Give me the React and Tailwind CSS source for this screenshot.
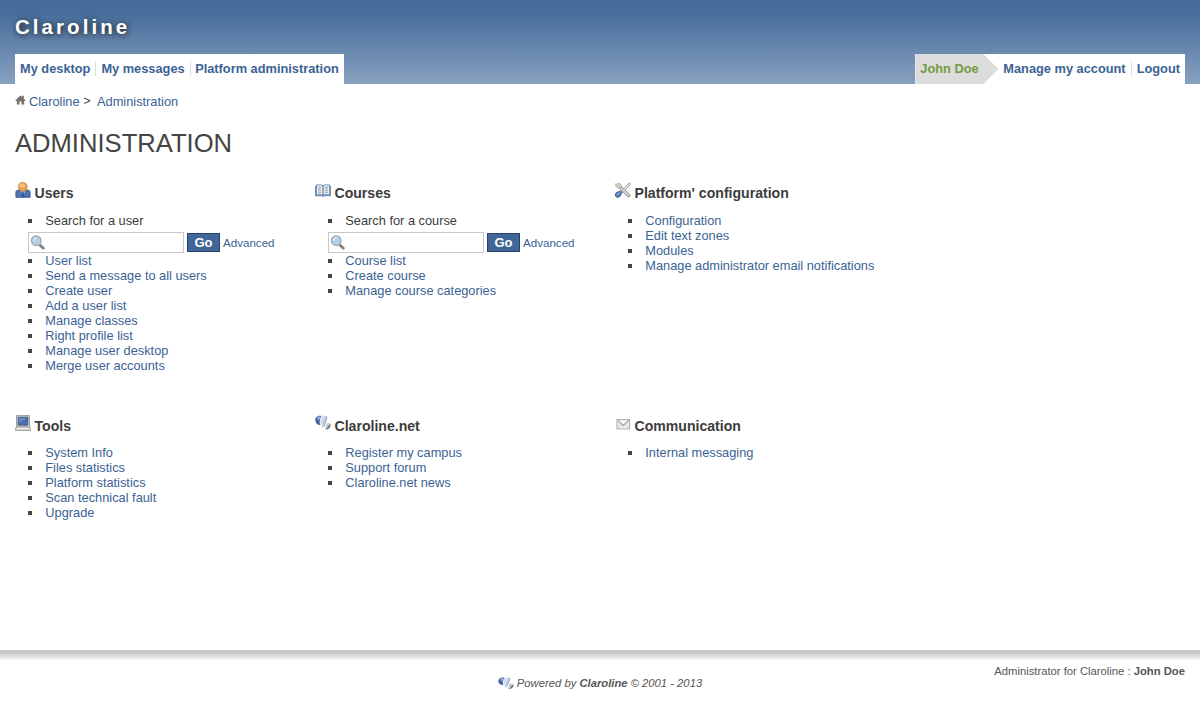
import React from "react";

const HomeIcon = () => (
  <svg width="11" height="10" viewBox="0 0 11 10" className="mb-[3px] block">
    <path d="M0.3 5.4 5.3 0.4 7 2V0.8h1.8v2.8l1.8 1.8-.6.5H9.200v3.600H6.400V6.500H4.500v3H1.900V5.900H.8z" fill="#79716c" />
  </svg>
);

const UserIcon = () => (
  <svg width="16" height="16" viewBox="0 0 16 16" className="block">
    <path d="M.9 15.300V10.200c0-1.300 1-2 2.600-2.100h9c1.600.1 2.600.8 2.600 2.100v5.100z" fill="#5274b2" stroke="#3a568e" strokeWidth=".9" />
    <path d="M5.300 8.800h5.400L8 14z" fill="#86a3d3" />
    <path d="M7.300 10.200h1.400l.8 3.800L8 15.200 6.500 14z" fill="#33559a" />
    <path d="M7.800.5c2.700 0 4.400 1.600 4.400 4.200 0 2.700-1.800 4.700-4.400 4.700S3.400 7.400 3.400 4.700C3.400 2.100 5.100.5 7.800.5z" fill="#e8a655" stroke="#c58440" strokeWidth=".8" />
    <ellipse cx="7.200" cy="3.400" rx="2.800" ry="2" fill="#f4c583" />
  </svg>
);

const BookIcon = () => (
  <svg width="16" height="16" viewBox="0 0 16 16" className="block">
    <path d="M.5 4h1V2.900h5L8 3.800l1.500-.9h5V4h1v9.800H9.300L8 14.400l-1.300-.6H.5z" fill="#7f9cc6" stroke="#6283b5" strokeWidth=".9" />
    <path d="M2 3.300h4.300L7.500 4.200v8.600l-1.200-.7H2zM14 3.300H9.700L8.500 4.200v8.600l1.200-.7H14z" fill="#ececec" />
    <path d="M3 5h3M3 6.800h3M3 8.600h3M3 10.400h3M10 5h3M10 6.800h3M10 8.600h3M10 10.400h3" stroke="#98a2b0" strokeWidth=".9" />
    <path d="M8 4v9.500" stroke="#75839a" strokeWidth=".9" />
  </svg>
);

const SettingsIcon = () => (
  <svg width="16" height="16" viewBox="0 0 16 16" className="block">
    <path d="m4.600 4.800 9 8.700" stroke="#8e8e8e" strokeWidth="3.400" strokeLinecap="round" />
    <path d="m4.600 4.800 8.900 8.600" stroke="#dedede" strokeWidth="1.800" strokeLinecap="round" />
    <path d="M1 1.500.7 4l2 2h2.500l1-1-.4-2.300L4.200 1l-1 .1.400 1.800-1 .7z" fill="#d8d8d8" stroke="#929292" strokeWidth=".7" />
    <path d="m6.500 9.100 6.300-7 1.800-1.300 1 .9-.9 1.500-6.900 7.100z" fill="#e4e4e4" stroke="#929292" strokeWidth=".8" />
    <path d="M4.700 9.300c1.200-.6 2.500.5 2 1.800-.6 1.900-2 4.300-4.100 4.300C.9 15.400.2 13.700.4 12c.3-1.600 2.700-2.100 4.300-2.700z" fill="#5a7fb7" stroke="#31558f" strokeWidth=".9" />
    <path d="m4.700 10.700-2.800 2" stroke="#8dabd6" strokeWidth="1.100" />
  </svg>
);

const ComputerIcon = () => (
  <svg width="16" height="16" viewBox="0 0 16 16" className="block">
    <path d="M1.500.6h13v11.200h-13z" fill="#d6d6d2" stroke="#999b98" />
    <path d="M3.200 2.200h9.600v7.900H3.200z" fill="#4d6dab" stroke="#344f86" strokeWidth=".8" />
    <path d="M3.800 2.800h8.400L4 7.800z" fill="#6c89bc" />
    <path d="M1.400 11.800h13.200l1 2v1.700H.4v-1.700z" fill="#d3d3cf" stroke="#969692" strokeWidth=".8" />
    <path d="M2 13.600h12" stroke="#ededea" />
  </svg>
);

const ClarolineIcon = ({ className = "block h-4 w-4" }) => (
  <svg viewBox="0 0 16 16" preserveAspectRatio="none" className={className}>
    <path d="M6.500.9C3 .2.2 2.200.3 5.200c.1 2.600 2 4.800 5.200 4.900C4 7.700 4.500 3.800 6.500.9z" fill="#3c62a3" />
    <path d="M2.600 2.300c1.100-.9 2.400-.9 3.400-.7-1 .9-1.700 2.300-1.900 3.600-1.300-.3-2.100-1.600-1.500-2.900z" fill="#a8bddc" />
    <path d="M6.900 1.200C5.200 3.300 4.600 6.800 5.800 9.900 8 9.300 9.400 7 10 4.600L10.200.9z" fill="#d5dfed" />
    <path d="M9.800.8c1.700-.4 2.500.7 1.900 2.500L9.100 11.300c-.6 1.700-2.200 1.900-2.500.8.1-1.100 2.300-7.700 3.200-11.300z" fill="#c2d0e4" />
    <path d="M11.400 1.300c.6 1.100.1 2.500-.3 3.700L9 11.200" fill="none" stroke="#7f98bf" strokeWidth=".9" />
    <path d="M11.600 8.500c2.500-1.200 4.200-.2 3.900 1.500-.3 2.300-2 4.500-4.400 4.700-1.300 0-1.300-1.400-.4-3z" fill="#c6c8ca" />
    <path d="M15.500 9.100c.3 2.900-1.500 5.600-4.500 5.500 1.500-1 2-4.300 4.500-5.500z" fill="#6e7176" />
  </svg>
);

const MailIcon = () => (
  <svg width="16" height="16" viewBox="0 0 16 16" className="block">
    <path d="M2 4.600h12.500v9.400H2z" fill="#ededed" stroke="#b3b3b3" strokeWidth="1.200" />
    <path d="m3 13.100 3.700-4M13.500 13.100l-3.700-4" stroke="#c7c7c7" strokeWidth=".8" />
    <path d="m3 5.700 5.200 4.700 5.300-4.700" fill="#fafafa" stroke="#999" strokeWidth="1.100" />
  </svg>
);

const SearchIcon = () => (
  <svg width="16" height="16" viewBox="0 0 16 16" className="block">
    <path d="m10.200 10.400 3.200 2.800" stroke="#81858a" strokeWidth="2.800" strokeLinecap="round" />
    <circle cx="6.200" cy="5.700" r="4.700" fill="#b4d0e8" stroke="#a3a7ad" strokeWidth="1.500" />
    <path d="M3.500 6c0-2 1.400-3 3.400-2.900" stroke="#d9ebf8" strokeWidth="1.500" fill="none" />
  </svg>
);

const sectionRows = [
  [
    { title: "Users", icon: <UserIcon />, search: "Search for a user", links: ["User list", "Send a message to all users", "Create user", "Add a user list", "Manage classes", "Right profile list", "Manage user desktop", "Merge user accounts"] },
    { title: "Courses", icon: <BookIcon />, search: "Search for a course", links: ["Course list", "Create course", "Manage course categories"] },
    { title: "Platform' configuration", icon: <SettingsIcon />, links: ["Configuration", "Edit text zones", "Modules", "Manage administrator email notifications"] },
  ],
  [
    { title: "Tools", icon: <ComputerIcon />, links: ["System Info", "Files statistics", "Platform statistics", "Scan technical fault", "Upgrade"] },
    { title: "Claroline.net", icon: <ClarolineIcon />, links: ["Register my campus", "Support forum", "Claroline.net news"] },
    { title: "Communication", icon: <MailIcon />, links: ["Internal messaging"] },
  ],
];

const Item = ({ children }) => (
  <li className="flex h-[15px] items-center">
    <span className="mr-[13.3px] h-1 w-1 shrink-0 bg-[#444]" />
    {children}
  </li>
);

const Section = ({ title, icon, search, links, listGap }) => (
  <section>
    <h2 className="flex h-[22px] items-start text-[14.08px] leading-[22px] font-bold text-[#3c3c3c]">
      <span className="mr-[3.5px] w-4">{icon}</span>
      <span>{title}</span>
    </h2>
    <ul className={`${listGap} pl-[13px]`}>
      {search && (
        <>
          <Item><span>{search}</span></Item>
          <li className="flex h-[25px] items-start pt-1">
            <label className="flex h-[21px] w-[156px] items-center border border-[#c8c8c8] pl-px">
              <SearchIcon />
              <input aria-label={search} className="w-[130px] outline-none" />
            </label>
            <button className="mt-px ml-[3px] h-[19px] w-[33px] border border-[#24446f] bg-[#416798] text-[13px] leading-[17px] font-bold text-white">Go</button>
            <a href="#" className="ml-[3px] text-[11.6px] leading-[22px] text-[#3b6294]">Advanced</a>
          </li>
        </>
      )}
      {links.map((link) => (
        <Item key={link}><a href="#" className="text-[#3b6294]">{link}</a></Item>
      ))}
    </ul>
  </section>
);

export default function App() {
  return (
    <div className="flex h-[704px] w-full flex-col overflow-hidden bg-white font-['Liberation_Sans',Arial,sans-serif] text-[12.8px] leading-[15px] text-[#3c3c3c]">
      <header className="flex h-[84px] shrink-0 flex-col justify-between bg-linear-to-b from-[#476d9b] from-15% to-[#88a1c0] px-[15px]">
        <div className="pt-[15px] text-[20.48px] leading-6 font-bold tracking-[3.07px] text-white [text-shadow:1px_1px_6px_#111]">Claroline</div>
        <div className="flex justify-between text-[12.8px] leading-[15px] font-bold text-[#3b6294]">
          <nav className="flex h-[30px] items-center bg-white pb-px">
            <a href="#" className="border-r border-[#ddd] px-[5px]">My desktop</a>
            <a href="#" className="border-r border-[#ddd] px-[5px]">My messages</a>
            <a href="#" className="pr-[5px] pl-[4.5px]">Platform administration</a>
          </nav>
          <nav className="flex h-[30px] items-center bg-white">
            <span className="flex h-full w-[83px] items-center bg-[#dcdcdc] pb-px pl-[5px] text-[#719b43] [clip-path:polygon(0_0,68px_0,83px_50%,68px_100%,0_100%)]">John Doe</span>
            <a href="#" className="mb-px border-r border-[#ddd] px-[5px]">Manage my account</a>
            <a href="#" className="mb-px px-[5px]">Logout</a>
          </nav>
        </div>
      </header>
      <main className="flex-1 px-[15px]">
        <div className="mt-[10px] flex h-[15px] items-center">
          <HomeIcon />
          <a href="#" className="ml-[3px] text-[#3b6294]">Claroline</a>
          <span className="ml-1 text-[12px]">&gt;</span>
          <a href="#" className="ml-[6.5px] text-[#3b6294]">Administration</a>
        </div>
        <h1 className="mt-[19px] text-[25.6px] leading-[30px] text-[#444]">ADMINISTRATION</h1>
        <div className="mt-[24px] grid grid-cols-[300px_300px_1fr] grid-rows-[233px_auto]">
          {sectionRows[0].map((s) => <Section key={s.title} {...s} listGap="mt-[9px]" />)}
          {sectionRows[1].map((s) => <Section key={s.title} {...s} listGap="mt-[8px]" />)}
        </div>
      </main>
      <footer className="h-[54px] shrink-0 text-[11.26px] leading-[13px] text-[#555]">
        <div className="h-[11px] bg-linear-to-b from-[#c8c8c8] from-25% to-white" />
        <div className="grid grid-cols-3 px-[15px] pt-1">
          <div />
          <div className="flex items-center justify-center pt-3 italic">
            <ClarolineIcon className="block h-[13px] w-4" />
            <span className="ml-[3px]">Powered by <b>Claroline</b> © 2001 - 2013</span>
          </div>
          <div className="text-right">Administrator for Claroline : <b>John Doe</b></div>
        </div>
      </footer>
    </div>
  );
}
